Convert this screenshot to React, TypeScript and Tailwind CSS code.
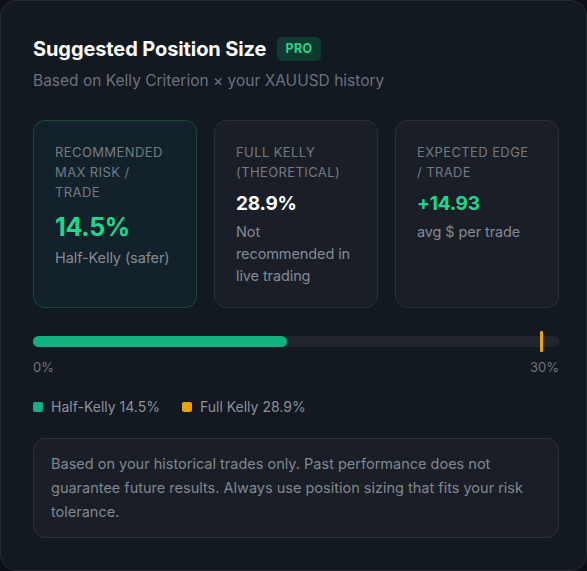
import React from "react";

export default function App() {
  return (
    <div
      className="w-[587px] h-[571px] bg-[#0c1016]"
      style={{ fontFamily: "Inter, 'Liberation Sans', sans-serif" }}
    >
      <div className="w-[587px] h-[571px] rounded-[16px] border border-[#262b33] bg-[#131921] pl-[32px] pr-[27px] pt-[35px]">
        <div className="flex items-center gap-[11px]">
          <h1 className="text-[20px] leading-[26px] font-bold text-white tracking-[-0.1px]">Suggested Position Size</h1>
          <span className="rounded-[5px] bg-[#0f3a30] px-[8px] py-[3px] text-[12.5px] leading-[18px] font-bold text-[#22d68c] tracking-[0.4px]">
            PRO
          </span>
        </div>
        <p className="mt-[8px] text-[15.5px] leading-[22px] text-[#6b727c]">Based on Kelly Criterion × your XAUUSD history</p>

        <div className="mt-[28px] grid grid-cols-3 gap-[17px]">
          <div className="h-[188px] rounded-[12px] border border-[#1b4a3a] bg-[#13222a] px-[21px] pt-[21px]">
            <div className="text-[13px] leading-[20px] uppercase tracking-[0.4px] text-[#737a83]">
              Recommended max risk / trade
            </div>
            <div className="mt-[8px] text-[25px] leading-[34px] font-bold text-[#19d98f] tracking-[-0.3px]">14.5%</div>
            <div className="mt-[3px] text-[14.5px] leading-[22px] text-[#838a93] tracking-[-0.1px]">Half-Kelly (safer)</div>
          </div>
          <div className="h-[188px] rounded-[12px] border border-[#2a2f38] bg-[#1a1f27] px-[21px] pt-[21px]">
            <div className="text-[13px] leading-[20px] uppercase tracking-[0.4px] text-[#737a83]">
              Full Kelly (theoretical)
            </div>
            <div className="mt-[9px] text-[19px] leading-[26px] font-bold text-white tracking-[-0.2px]">28.9%</div>
            <div className="mt-[4px] text-[14.5px] leading-[22px] text-[#838a93] tracking-[-0.1px]">Not recommended in live trading</div>
          </div>
          <div className="h-[188px] rounded-[12px] border border-[#2a2f38] bg-[#1a1f27] px-[21px] pt-[21px]">
            <div className="text-[13px] leading-[20px] uppercase tracking-[0.4px] text-[#737a83]">
              Expected edge / trade
            </div>
            <div className="mt-[9px] text-[19px] leading-[26px] font-bold text-[#19d98f] tracking-[-0.2px]">+14.93</div>
            <div className="mt-[4px] text-[14.5px] leading-[22px] text-[#838a93] tracking-[-0.1px]">avg $ per trade</div>
          </div>
        </div>

        <div className="relative mt-[28px] h-[11px] rounded-full bg-[#20252e]">
          <div className="h-full rounded-full bg-[#10b17f]" style={{ width: `${(14.5 / 30) * 100}%` }} />
          <div
            className="absolute top-[-5px] h-[21px] w-[3px] rounded-[1px] bg-[#f0a400]"
            style={{ left: `${(28.9 / 30) * 100}%` }}
          />
        </div>
        <div className="mt-[10px] flex justify-between text-[13px] leading-[20px] text-[#6e757e]">
          <span>0%</span>
          <span>30%</span>
        </div>

        <div className="mt-[20px] flex items-center gap-[22px] text-[14px] leading-[20px] text-[#8a9199]">
          <div className="flex items-center gap-[8px]">
            <span className="h-[10px] w-[10px] rounded-[2px] bg-[#10b17f]" />
            <span>Half-Kelly 14.5%</span>
          </div>
          <div className="flex items-center gap-[8px]">
            <span className="h-[10px] w-[10px] rounded-[2px] bg-[#eaa300]" />
            <span>Full Kelly 28.9%</span>
          </div>
        </div>

        <div className="mt-[21px] rounded-[12px] border border-[#2a2f38] bg-[#1a1f27] px-[17px] py-[13px] text-[14.5px] leading-[24px] text-[#80878f]">
          Based on your historical trades only. Past performance does not guarantee future results. Always use position
          sizing that fits your risk tolerance.
        </div>
      </div>
    </div>
  );
}
